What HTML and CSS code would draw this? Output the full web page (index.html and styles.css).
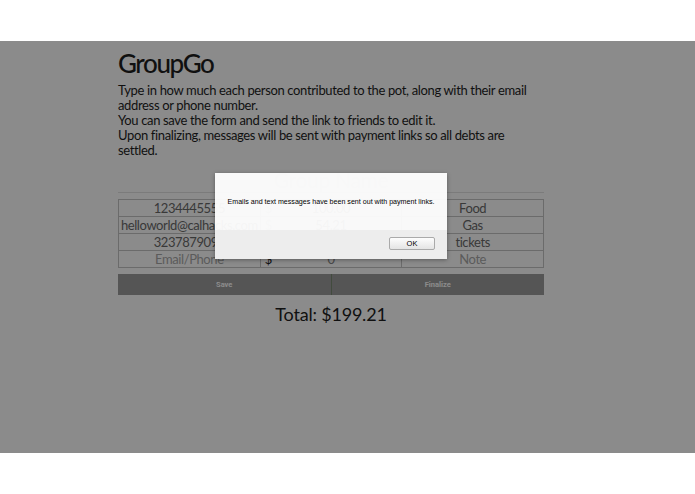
FILE: index.html
```html
<!DOCTYPE html>
<html lang="en">
<head>
    <meta charset="UTF-8">
    <meta name="viewport" content="width=device-width, initial-scale=1.0">
    <title>GroupGo</title>
    <link rel="stylesheet" href="styles.css">
</head>
<body>
    <div class="screen">
        <div class="container">
            <h1>GroupGo</h1>
            <p class="intro">
                Type in how much each person contributed to the pot, along with their email address or phone number.<br>
                You can save the form and send the link to friends to edit it.<br>
                Upon finalizing, messages will be sent with payment links so all debts are settled.
            </p>

            <h2 class="group-name">Group Name</h2>

            <table class="pot">
                <tr>
                    <td><input class="contact" value="1234445555"></td>
                    <td><div class="amount"><span class="dollar">$</span><input value="100.00"></div></td>
                    <td><input class="note" value="Food"></td>
                </tr>
                <tr>
                    <td><input class="contact" value="helloworld@calhacks.com"></td>
                    <td><div class="amount"><span class="dollar">$</span><input value="54.21"></div></td>
                    <td><input class="note" value="Gas"></td>
                </tr>
                <tr>
                    <td><input class="contact" value="3237879090"></td>
                    <td><div class="amount"><span class="dollar">$</span><input value="45.00"></div></td>
                    <td><input class="note" value="tickets"></td>
                </tr>
                <tr class="new-row">
                    <td><input class="contact" placeholder="Email/Phone"></td>
                    <td><div class="amount"><span class="dollar dark">$</span><input class="dark" placeholder="0"></div></td>
                    <td><input class="note" placeholder="Note"></td>
                </tr>
            </table>

            <div class="actions">
                <button class="btn">Save</button>
                <button class="btn">Finalize</button>
            </div>

            <div class="total">Total: $199.21</div>
        </div>

        <!-- modal alert shown after finalizing -->
        <div class="overlay"></div>
        <div class="alert">
            <div class="alert-body">Emails and text messages have been sent out with payment links.</div>
            <div class="alert-footer">
                <button class="ok">OK</button>
            </div>
        </div>
    </div>
</body>
</html>
```

FILE: styles.css
```css
body {
    margin: 0;
    background: white;
    font-family: Lato, "Open Sans", sans-serif;
}
.screen {
    position: relative;
    margin-top: 41px;
    height: 412px;
    background: white;
    overflow: hidden;
}
.container {
    width: 426px;
    margin-left: 118px;
    padding-top: 6px;
}
h1 {
    margin: 0;
    font-size: 26px;
    font-weight: 500;
    line-height: 32px;
    letter-spacing: -1.4px;
    color: #1e1e1e;
}
.intro {
    margin: 4px 0 0;
    font-size: 13px;
    line-height: 15px;
    letter-spacing: -0.35px;
    color: #1e1e1e;
}
.group-name {
    margin: 2px 0 0;
    padding-top: 7px;
    text-align: center;
    font-size: 21px;
    font-weight: 400;
    line-height: 25px;
    letter-spacing: -0.3px;
    color: #d0d0d0;
    border-bottom: 1px solid #e2e2e2;
}
.pot {
    width: 100%;
    margin-top: 6px;
    border-collapse: collapse;
    table-layout: fixed;
}
.pot td {
    border: 1px solid #c4c4c4;
    padding: 0;
    height: 16px;
    vertical-align: middle;
}
.pot input {
    display: block;
    width: 100%;
    box-sizing: border-box;
    border: none;
    background: transparent;
    padding: 0;
    height: 16px;
    line-height: 16px;
    font-family: inherit;
    font-size: 13px;
    letter-spacing: -0.4px;
    text-align: center;
    color: #6a6a6a;
    outline: none;
}
.pot input::placeholder {
    color: #a8a8a8;
}
.amount {
    display: flex;
    align-items: center;
}
.dollar {
    flex: none;
    width: 12px;
    padding-left: 4px;
    font-size: 13px;
    line-height: 16px;
    color: #b4b4b4;
}
.amount input {
    flex: 1;
    min-width: 0;
    padding-right: 16px;
}
.dollar.dark {
    color: #222;
}
.pot input.dark::placeholder {
    color: #888;
}
.actions {
    display: flex;
    margin-top: 6px;
    background: #9c9c9c;
}
.btn {
    flex: 1;
    height: 21px;
    border: none;
    background: #9c9c9c;
    color: white;
    font-family: Roboto, sans-serif;
    font-weight: 700;
    font-size: 7.5px;
}
.btn + .btn {
    border-left: 1px solid #7a8a72;
}
.total {
    margin-top: 8px;
    text-align: center;
    font-size: 18px;
    line-height: 23px;
    letter-spacing: -0.2px;
    color: #1e1e1e;
}
.overlay {
    position: absolute;
    inset: 0;
    background: rgba(0, 0, 0, 0.455);
}
.alert {
    position: absolute;
    left: 215px;
    top: 132px;
    width: 232px;
    height: 86px;
    background: rgba(255, 255, 255, 0.95);
    box-shadow: 0 1px 4px rgba(0, 0, 0, 0.35);
    font-family: "Liberation Sans", Arial, sans-serif;
    display: flex;
    flex-direction: column;
}
.alert-body {
    height: 57px;
    padding-top: 25px;
    box-sizing: border-box;
    text-align: center;
    font-size: 7.1px;
    color: #000;
}
.alert-footer {
    flex: 1;
    background: rgba(236, 236, 236, 0.92);
    display: flex;
    justify-content: flex-end;
    align-items: flex-start;
    padding: 7px 12px 0 0;
}
.ok {
    width: 46px;
    height: 13px;
    padding: 0;
    border: 1px solid #aaa;
    border-radius: 2px;
    background: linear-gradient(#fdfdfd, #e4e4e4);
    font-family: "Liberation Sans", Arial, sans-serif;
    font-size: 7.5px;
    color: #000;
}
```
